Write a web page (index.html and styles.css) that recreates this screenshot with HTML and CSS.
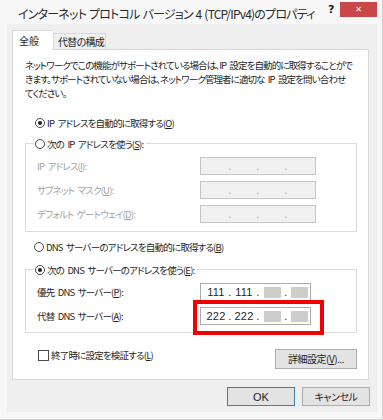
FILE: index.html
```html
<!DOCTYPE html>
<html lang="ja">
<head>
  <meta charset="UTF-8" />
  <title>インターネット プロトコル バージョン 4 (TCP/IPv4)のプロパティ</title>
  <link rel="stylesheet" href="styles.css">
</head>
<body>
  <div class="window">
    <div class="titlebar">
      <span class="title">インターネット プロトコル バージョン 4 (TCP/IPv4)のプロパティ</span>
      <span class="help">?</span>
      <span class="close">✕</span>
    </div>

    <div class="client">
      <div class="tabs">
        <div class="tab active">全般</div>
        <div class="tab">代替の構成</div>
      </div>

      <div class="panel">
        <p class="intro">ネットワークでこの機能がサポートされている場合は、IP 設定を自動的に取得することがで<br>きます。サポートされていない場合は、ネットワーク管理者に適切な IP 設定を問い合わせ<br>てください。</p>

        <div class="option first">
          <span class="radio checked"></span>
          <span>IP アドレスを自動的に取得する(<u>O</u>)</span>
        </div>

        <div class="group disabled">
          <div class="option legend">
            <span class="radio"></span>
            <span>次の IP アドレスを使う(<u>S</u>):</span>
          </div>
          <div class="row">
            <span class="label">IP アドレス(<u>I</u>):</span>
            <div class="ipfield off">
              <span class="seg"></span><span class="dot">.</span><span class="seg"></span><span class="dot">.</span><span class="seg"></span><span class="dot">.</span><span class="seg last"></span>
            </div>
          </div>
          <div class="row">
            <span class="label">サブネット マスク(<u>U</u>):</span>
            <div class="ipfield off">
              <span class="seg"></span><span class="dot">.</span><span class="seg"></span><span class="dot">.</span><span class="seg"></span><span class="dot">.</span><span class="seg last"></span>
            </div>
          </div>
          <div class="row">
            <span class="label">デフォルト ゲートウェイ(<u>D</u>):</span>
            <div class="ipfield off">
              <span class="seg"></span><span class="dot">.</span><span class="seg"></span><span class="dot">.</span><span class="seg"></span><span class="dot">.</span><span class="seg last"></span>
            </div>
          </div>
        </div>

        <div class="option dns-auto">
          <span class="radio"></span>
          <span>DNS サーバーのアドレスを自動的に取得する(<u>B</u>)</span>
        </div>

        <div class="group dns">
          <div class="option legend">
            <span class="radio checked"></span>
            <span>次の DNS サーバーのアドレスを使う(<u>E</u>):</span>
          </div>
          <div class="row">
            <span class="label">優先 DNS サーバー(<u>P</u>):</span>
            <div class="ipfield">
              <span class="seg">111</span><span class="dot">.</span><span class="seg">111</span><span class="dot">.</span><span class="seg"><i class="mask"></i></span><span class="dot">.</span><span class="seg last"><i class="mask"></i></span>
            </div>
          </div>
          <div class="row">
            <span class="label">代替 DNS サーバー(<u>A</u>):</span>
            <div class="ipfield">
              <span class="seg">222</span><span class="dot">.</span><span class="seg">222</span><span class="dot">.</span><span class="seg"><i class="mask"></i></span><span class="dot">.</span><span class="seg last"><i class="mask"></i></span>
              <span class="highlight"></span>
            </div>
          </div>
        </div>

        <div class="bottom-row">
          <div class="check">
            <span class="checkbox"></span>
            <span>終了時に設定を検証する(<u>L</u>)</span>
          </div>
          <button class="btn advanced">詳細設定(<u>V</u>)...</button>
        </div>
      </div>

      <div class="footer">
        <button class="btn default">OK</button>
        <button class="btn">キャンセル</button>
      </div>
    </div>
  </div>
</body>
</html>
```

FILE: styles.css
```css
* {
  box-sizing: border-box;
}

html, body {
  margin: 0;
  padding: 0;
  background: #f7f7f7;
}

body {
  font-family: "Noto Sans CJK JP", "Noto Sans", sans-serif;
  font-feature-settings: "palt";
  font-size: 9.5px;
  letter-spacing: -0.8px;
  word-spacing: 2px;
  color: #1e1e1e;
  white-space: nowrap;
}

.window {
  width: 383px;
  height: 420px;
  background: #f7f7f7;
  border-right: 1px solid #cfcfcf;
  border-bottom: 1px solid #cfcfcf;
}

.titlebar {
  height: 24px;
  display: flex;
  align-items: flex-start;
}

.title {
  margin: 6px 0 0 18px;
  font-size: 12px;
  line-height: 16px;
  letter-spacing: -0.8px;
  word-spacing: 1px;
  color: #2a2a2a;
}

.help {
  margin: 3px 0 0 auto;
  width: 12px;
  font-family: "DejaVu Sans", sans-serif;
  font-weight: bold;
  font-size: 11px;
  line-height: 14px;
  letter-spacing: 0;
  color: #222;
}

.close {
  width: 37px;
  height: 15px;
  margin: 2px 5px 0 0;
  background: #c9474b;
  color: #fff;
  font-family: "DejaVu Sans", sans-serif;
  font-size: 8px;
  line-height: 15px;
  letter-spacing: 0;
  text-align: center;
  font-weight: bold;
}

.client {
  width: 370px;
  height: 388px;
  margin-left: 7px;
  padding: 6px 7px 0 5px;
  background: #efefef;
}

/* tabs */
.tabs {
  display: flex;
  align-items: flex-end;
  height: 19px;
  position: relative;
  z-index: 1;
  font-size: 10px;
}

.tab {
  width: 53px;
  height: 16px;
  padding: 0 0 0 4px;
  border: 1px solid #d9d9d9;
  border-bottom: none;
  background: #f0f0f0;
  line-height: 15px;
  letter-spacing: -0.7px;
}

.tab.active {
  width: 41px;
  height: 20px;
  margin-bottom: -1px;
  padding: 2px 0 0 6px;
  background: #fff;
  border-right: none;
  letter-spacing: 0;
}

.panel {
  width: 357px;
  height: 331px;
  background: #fff;
  border: 1px solid #d9d9d9;
  padding: 8px 11px 0 12px;
}

.intro {
  margin: 0;
  letter-spacing: -0.9px;
  line-height: 14px;
}

/* radio rows */
.option {
  display: flex;
  align-items: center;
  height: 14px;
  line-height: 14px;
}

.option.first {
  margin: 16px 0 0 10px;
}

.option.dns-auto {
  margin: 8px 0 0 9px;
}

.radio {
  position: relative;
  flex: none;
  width: 10px;
  height: 10px;
  margin-right: 2px;
  border: 1px solid #4a4a4a;
  border-radius: 50%;
  background: #fff;
}

.radio.checked::after {
  content: "";
  position: absolute;
  left: 2px;
  top: 2px;
  width: 4px;
  height: 4px;
  border-radius: 50%;
  background: #1e1e1e;
}

/* group boxes */
.group {
  border: 1px solid #dcdcdc;
  margin-top: 13px;
  padding: 0 0 8px 11px;
}

.group .legend {
  width: fit-content;
  height: 15px;
  margin: -8px 0 0 -3px;
  padding: 0 3px 0 1px;
  background: #fff;
}

.group.dns {
  margin-top: 15px;
  padding-bottom: 7px;
}

.group .row:first-of-type {
  margin-top: 4px;
}

.group.dns .row:first-of-type {
  margin-top: 5px;
}

.row {
  display: flex;
  align-items: center;
  height: 18px;
  margin-top: 6px;
}

.label {
  width: 163px;
  flex: none;
}

.disabled .label {
  color: #a3a3a3;
}

.ipfield {
  position: relative;
  display: flex;
  align-items: center;
  width: 111px;
  height: 18px;
  padding-left: 4px;
  border: 1px solid #acacac;
  background: #fff;
  font-family: "Liberation Sans", Arial, sans-serif;
  font-size: 11px;
  letter-spacing: 0.2px;
}

.ipfield.off {
  width: 116px;
  border-color: #c6c6c6;
  background: #f0f0f0;
}

.seg {
  width: 22px;
  display: flex;
  justify-content: center;
  align-items: center;
}

.seg.last {
  flex: 1;
}

.dot {
  width: 6px;
  text-align: center;
}

.off .dot {
  color: #b8978a;
}

.mask {
  display: block;
  width: 17px;
  height: 11px;
  background: #cdcdcd;
}

.highlight {
  position: absolute;
  left: -8px;
  top: -8px;
  width: 131px;
  height: 35px;
  border: 4px solid #f00000;
}

/* bottom of panel */
.bottom-row {
  display: flex;
  align-items: flex-start;
  margin-top: 16px;
  padding-left: 13px;
}

.check {
  display: flex;
  align-items: center;
  height: 14px;
  margin-top: -1px;
}

.checkbox {
  width: 11px;
  height: 11px;
  margin-right: 2px;
  border: 1px solid #4a4a4a;
  background: #fff;
}

.btn {
  height: 19px;
  padding: 0;
  font-family: "Noto Sans CJK JP", sans-serif;
  font-feature-settings: "palt";
  font-size: 10px;
  letter-spacing: -0.5px;
  line-height: 16px;
  color: #1e1e1e;
  background: #e3e3e3;
  border: 1px solid #adadad;
  border-radius: 0;
}

.advanced {
  width: 82px;
  height: 20px;
  margin-left: auto;
}

.footer {
  display: flex;
  justify-content: flex-end;
  gap: 7px;
  margin-top: 7px;
}

.footer .btn {
  width: 68px;
}

.btn.default {
  border-color: #3c7fb1;
  font-family: "Liberation Sans", Arial, sans-serif;
  font-size: 11px;
  letter-spacing: 0;
}
```
